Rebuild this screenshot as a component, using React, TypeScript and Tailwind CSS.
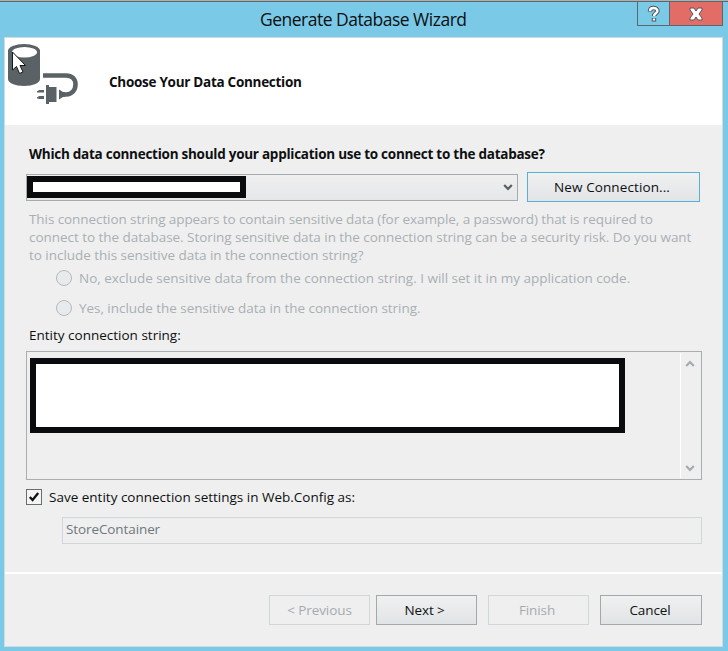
import React from "react";

function ConnectionIcon() {
  return (
    <svg width="76" height="70" viewBox="5 38 76 70" className="block">
      <path d="M8 50V79C8 83 15 86 24 86S40 83 40 79V50Z" fill="#5b6265" />
      <ellipse cx="24" cy="51" rx="16" ry="7" fill="#5b6265" />
      <ellipse cx="24.500" cy="52.300" rx="12.500" ry="5.200" fill="#fff" />
      <path d="M43 75.500H66C72 75.500 75.500 79 75.500 84.500S72 94.500 66 94.500H62" fill="none" stroke="#5b6265" strokeWidth="4.600" />
      <path d="M46 85H49V87H56.500V102H49V104H46ZM59 89.500L63 92H65V97H63L59 99.500ZM38.500 90H44V92.500H38.500ZM38.500 96H44V99H38.500ZM37 91H39V92.500H37ZM37 97H39V98.500H37Z" fill="#5b6265" />
      <path d="M12.500 52V70L16.500 66.500L19.500 73.500L23 72L20 65.500L25.500 65.500Z" fill="#fff" stroke="#14181b" strokeWidth="1" />
    </svg>
  );
}

function Chevron({ up = false, color, size }: { up?: boolean; color: string; size: number }) {
  return (
    <svg width={size} height={size} viewBox="0 0 10 10" className="block">
      <path d={up ? "M1.200 7L5 3L8.800 7" : "M1.200 3L5 7L8.800 3"} fill="none" stroke={color} strokeWidth="2.200" />
    </svg>
  );
}

function Radio({ label, spacing }: { label: string; spacing: string }) {
  return (
    <div className="flex h-[30px] items-center">
      <span className="h-4 w-4 shrink-0 rounded-full border border-[#b4babe] bg-[#e8ebed]" />
      <span className={"ml-[7px] " + spacing}>{label}</span>
    </div>
  );
}

function WizardButton({ label, disabled = false, className }: { label: string; disabled?: boolean; className: string }) {
  const look = disabled
    ? "border-[#d0d6da] bg-[#efefef] text-[#a5abaf]"
    : "border-[#a2a8ac] bg-linear-to-b from-[#f0f0f0] to-[#e1e4e6] text-[#101214]";
  return (
    <button disabled={disabled} className={"flex h-[30px] items-center justify-center border tracking-[-0.1px] " + look + " " + className}>
      {label}
    </button>
  );
}

export default function App() {
  return (
    <div className="flex h-[651px] w-[728px] flex-col overflow-hidden bg-[#7ac9e7] font-['Open_Sans','Noto_Sans',sans-serif] text-[13.5px] leading-[18px] whitespace-nowrap text-[#0d0f11]">
      <header className="flex h-[37px] shrink-0 border-t border-[#a9b1b5]">
        <div className="flex w-full border-t border-[#5f676b]">
          <h1 className="w-[637px] pt-[5px] pl-[260px] text-[17.5px] leading-6 tracking-[-0.5px]">Generate Database Wizard</h1>
          <div className="flex h-6 w-[86px] border-x border-b border-[#5b666d]">
            <button className="flex w-[32px] items-center justify-center border-r border-[#5b666d]">
              <svg width="14" height="18" viewBox="0 0 14 18">
                <path d="M3 6.500C3 3.500 4.500 3 6.500 3S10.500 4 10.500 6S7 8.500 7 11M7 13V16.500" fill="none" stroke="#4c5357" strokeWidth="4.400" />
                <path d="M3 6C3 3.500 4.500 3 6.500 3S10.500 4 10.500 6S7 8.500 7 11M7 13.500V15.500" fill="none" stroke="#fff" strokeWidth="2.400" />
              </svg>
            </button>
            <button className="flex flex-1 items-center justify-center bg-[#e26c66]">
              <svg width="16" height="14" viewBox="0 0 16 14">
                <path d="M2 1H6L8 4L10 1H14V3L11 7L14 11V13H10L8 10L6 13H2V11L5 7L2 3Z" fill="#fff" stroke="#5b555a" strokeWidth="1" />
              </svg>
            </button>
          </div>
        </div>
      </header>

      <main className="mr-[5px] ml-[4px] flex h-[610px] flex-col border-x border-b border-[#d2dce0] bg-[#efefef]">
        <section className="flex h-[88px] shrink-0 border-t border-[#d2dce0] bg-white">
          <ConnectionIcon />
          <h2 className="ml-[28px] pt-[35px] font-bold tracking-[-0.28px]">Choose Your Data Connection</h2>
        </section>

        <section className="flex h-[449px] shrink-0 flex-col border-b-2 border-white pr-[20px] pl-[21px]">
          <h3 className="mt-[20px] ml-[3px] font-bold tracking-[-0.26px]">
            Which data connection should your application use to connect to the database?
          </h3>
          <div className="mt-[9px] flex h-[30px] items-center">
            <div className="flex h-[27px] w-[492px] items-center justify-between border border-[#a4abaf] bg-linear-to-b from-[#efefef] to-[#e5e7e9] pr-[4px]">
              <div className="h-[22px] w-[219px] border-[6px] border-[#0a0b0d] bg-white" />
              <Chevron color="#555d62" size={10} />
            </div>
            <button className="ml-[9px] flex h-[30px] w-[173px] items-center justify-center border border-[#56b1d7] bg-linear-to-b from-[#f0f0f0] to-[#e1e4e6] pr-[3px] tracking-[0.1px]">
              New Connection...
            </button>
          </div>
          <div className="mt-[8px] ml-[3px] text-[#a9afb3]">
            <p className="tracking-[-0.08px]">This connection string appears to contain sensitive data (for example, a password) that is required to</p>
            <p className="tracking-[-0.04px]">connect to the database. Storing sensitive data in the connection string can be a security risk. Do you want</p>
            <p className="tracking-[-0.03px]">to include this sensitive data in the connection string?</p>
          </div>
          <div className="-mt-px ml-[30px] text-[#a9afb3]">
            <Radio label="No, exclude sensitive data from the connection string. I will set it in my application code." spacing="tracking-[-0.01px]" />
            <Radio label="Yes, include the sensitive data in the connection string." spacing="tracking-[-0.04px]" />
          </div>
          <p className="mt-[3px] ml-[3px]">Entity connection string:</p>
          <div className="mt-[7px] flex h-[129px] w-[676px] shrink-0 justify-between border border-[#a8aeb2] pt-[6px] pl-[3px]">
            <div className="h-[75px] w-[595px] border-[6px] border-[#0a0b0d] bg-white" />
            <div className="-mt-[5px] mb-px flex w-[21px] flex-col items-center justify-between border-l border-white pt-[6px] pr-[3px] pb-[5px]">
              <Chevron up color="#a5abaf" size={10} />
              <Chevron color="#a5abaf" size={10} />
            </div>
          </div>
          <div className="mt-[8px] flex h-[18px] items-center">
            <span className="flex h-4 w-4 items-center justify-center border border-[#666e72] bg-[#f4f4f4]">
              <svg width="12" height="12" viewBox="0 0 12 12"><path d="M1.800 6L4.600 9L10.200 2" fill="none" stroke="#111" strokeWidth="2.300" /></svg>
            </span>
            <span className="ml-[7px]">Save entity connection settings in Web.Config as:</span>
          </div>
          <div className="mt-[11px] ml-[36px] flex h-[27px] w-[640px] items-center border border-[#d0d6da] px-[3px] pb-[3px] tracking-[-0.1px] text-[#70787d]">
            StoreContainer
          </div>
        </section>

        <footer className="flex pt-[21px] pl-[264px]">
          <WizardButton label="< Previous" disabled className="w-[101px]" />
          <WizardButton label="Next >" className="ml-[6px] w-[101px] pr-1" />
          <WizardButton label="Finish" disabled className="ml-[11px] w-[101px] pr-[3px]" />
          <WizardButton label="Cancel" className="ml-[11px] w-[102px] pr-[2px]" />
        </footer>
      </main>
    </div>
  );
}
